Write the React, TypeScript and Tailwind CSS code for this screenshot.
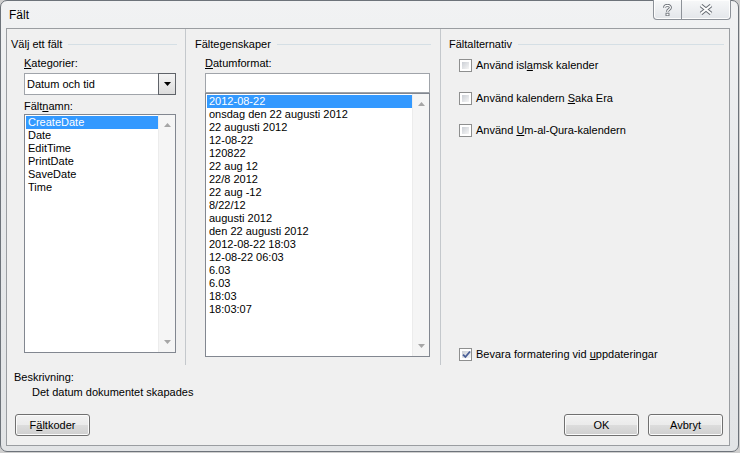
import React from 'react';

const fieldNames = ['CreateDate', 'Date', 'EditTime', 'PrintDate', 'SaveDate', 'Time'];

const dateFormats = [
  '2012-08-22',
  'onsdag den 22 augusti 2012',
  '22 augusti 2012',
  '12-08-22',
  '120822',
  '22 aug 12',
  '22/8 2012',
  '22 aug -12',
  '8/22/12',
  'augusti 2012',
  'den 22 augusti 2012',
  '2012-08-22 18:03',
  '12-08-22 06:03',
  '6.03',
  '6.03',
  '18:03',
  '18:03:07'
];

const btn =
  'h-[22px] w-[75px] rounded-[3px] border border-[#707070] bg-[linear-gradient(to_bottom,#f2f2f2_0%,#ebebeb_50%,#dddddd_50%,#cfcfcf_100%)] shadow-[inset_0_0_0_1px_#fbfbfb] flex items-center justify-center leading-[13px]';

const GroupHeader = ({ title, className }: { title: string; className: string }) => (
  <div className={`flex items-center mt-[9px] h-[13px] ${className}`}>
    <span className="leading-[13px] whitespace-nowrap">{title}</span>
    <div className="flex-1 h-px bg-[#d5dfe5] ml-[6px]" />
  </div>
);

const ScrollArrow = ({ up }: { up?: boolean }) => (
  <svg width="7" height="4" viewBox="0 0 7 4">
    <path d={up ? 'M0 4 L3.5 0 L7 4 Z' : 'M0 0 L7 0 L3.5 4 Z'} fill="#a6a6a6" />
  </svg>
);

const ListBox = ({ items, className }: { items: string[]; className: string }) => (
  <div className={`flex border border-[#828790] bg-white ${className}`}>
    <div className="flex-1 pl-px pt-px">
      {items.map((item, i) => (
        <div
          key={i}
          className={`h-[13px] leading-[13px] pl-[2px] whitespace-nowrap ${
            i === 0 ? 'bg-[#3399ff] text-white' : ''
          }`}
        >
          {item}
        </div>
      ))}
    </div>
    <div className="w-[17px] bg-[#f5f5f5] border-l border-[#ececec] flex flex-col items-center justify-between py-[8px]">
      <ScrollArrow up />
      <ScrollArrow />
    </div>
  </div>
);

const CheckBox = ({ checked }: { checked?: boolean }) => (
  <span className="w-[13px] h-[13px] border border-[#8e8f8f] bg-white p-[2px] flex shrink-0">
    <span className="flex-1 bg-[linear-gradient(135deg,#cbcfd5,#f6f6f6)] flex items-center justify-center">
      {checked && (
        <svg width="9" height="9" viewBox="0 0 9 9">
          <path d="M1 4.6 L3.4 7 L8 1.5" fill="none" stroke="#4a5f97" strokeWidth="1.8" />
        </svg>
      )}
    </span>
  </span>
);

const Option = ({ children, checked, className = '' }: { children: React.ReactNode; checked?: boolean; className?: string }) => (
  <div className={`flex items-center gap-[4px] h-[13px] ${className}`}>
    <CheckBox checked={checked} />
    <span className="leading-[13px] whitespace-nowrap">{children}</span>
  </div>
);

export default function App() {
  return (
    <div className="w-[740px] h-[453px] bg-[#cfcfcf] font-['Liberation_Sans',Arial,sans-serif] text-[11px] text-black">
      <div className="w-[739px] h-[452px] flex flex-col rounded-[7px] border border-[#6d737a] bg-[linear-gradient(180deg,#f1f2f3_0%,#e8eaec_40%,#e2e4e6_100%)]">
        {/* Title bar */}
        <div className="h-[27px] flex justify-between items-start">
          <span className="ml-[8px] mt-[7px] text-[12px] leading-[15px]">Fält</span>
          <div className="-mt-px mr-[7px] flex h-[20px] rounded-b-[4px] border border-[#8d9299] border-t-0 bg-[linear-gradient(to_bottom,#f7f8f9,#e3e6ea)] shadow-[inset_0_0_0_1px_#fdfdfd] overflow-hidden">
            <div className="w-[28px] flex items-center justify-center border-r border-[#8d9299]">
              <svg width="9" height="12" viewBox="0 0 9 12">
                <path d="M1.6 3.8 C1.6 0.6 7.4 0.6 7.4 3.6 C7.4 5.6 4.5 5.6 4.5 7.8" fill="none" stroke="#6b7077" strokeWidth="3" />
                <path d="M1.6 3.8 C1.6 0.6 7.4 0.6 7.4 3.6 C7.4 5.6 4.5 5.6 4.5 7.8" fill="none" stroke="#ffffff" strokeWidth="1.2" />
                <rect x="3" y="9.2" width="3" height="2.6" fill="#ffffff" stroke="#6b7077" strokeWidth="0.9" />
              </svg>
            </div>
            <div className="w-[48px] flex items-center justify-center">
              <svg width="14" height="11" viewBox="0 0 14 11">
                <path d="M2 1.5 L12 9.5 M12 1.5 L2 9.5" stroke="#6b7077" strokeWidth="4" />
                <path d="M2 1.5 L12 9.5 M12 1.5 L2 9.5" stroke="#ffffff" strokeWidth="2" />
              </svg>
            </div>
          </div>
        </div>

        {/* Client area */}
        <div className="ml-[5px] w-[724px] h-[418px] border border-[#9a9da1] bg-[#f0f0f0] flex flex-col">
          <div className="h-[336px] flex">
            {/* Välj ett fält */}
            <div className="w-[179px] border-r border-[#c4c8cc] flex flex-col">
              <GroupHeader title="Välj ett fält" className="pl-[4px] pr-[8px]" />
              <div className="pl-[17px] flex flex-col">
                <div className="mt-[6px] leading-[13px]">
                  <span className="underline">K</span>ategorier:
                </div>
                <div className="mt-[3px] w-[152px] h-[22px] border border-[#a0a4aa] bg-white flex">
                  <span className="flex-1 pl-[2px] leading-[20px]">Datum och tid</span>
                  <div className="-my-px -mr-px w-[18px] border border-[#5f6369] bg-[linear-gradient(to_bottom,#f4f4f4,#dcdcdc)] flex items-center justify-center">
                    <svg width="7" height="4" viewBox="0 0 7 4">
                      <path d="M0 0 L7 0 L3.5 4 Z" fill="#000" />
                    </svg>
                  </div>
                </div>
                <div className="mt-[5px] leading-[13px]">
                  Fält<span className="underline">n</span>amn:
                </div>
                <ListBox items={fieldNames} className="mt-px w-[152px] h-[239px]" />
              </div>
            </div>

            {/* Fältegenskaper */}
            <div className="w-[255px] border-r border-[#c4c8cc] flex flex-col">
              <GroupHeader title="Fältegenskaper" className="pl-[9px] pr-[9px]" />
              <div className="pl-[19px] flex flex-col">
                <div className="mt-[6px] leading-[13px]">
                  <span className="underline">D</span>atumformat:
                </div>
                <div className="mt-[3px] w-[225px] h-[20px] border border-[#a0a4aa] bg-white" />
                <ListBox items={dateFormats} className="w-[225px] h-[264px]" />
              </div>
            </div>

            {/* Fältalternativ */}
            <div className="flex-1 flex flex-col">
              <GroupHeader title="Fältalternativ" className="pl-[8px] pr-[5px]" />
              <div className="pl-[18px] flex flex-col flex-1">
                <Option className="mt-[8px]">
                  Använd isl<span className="underline">a</span>msk kalender
                </Option>
                <Option className="mt-[20px]">
                  Använd kalendern <span className="underline">S</span>aka Era
                </Option>
                <Option className="mt-[19px]">
                  Använd <span className="underline">U</span>m-al-Qura-kalendern
                </Option>
                <Option checked className="mt-auto mb-[4px]">
                  Bevara formatering vid <span className="underline">u</span>ppdateringar
                </Option>
              </div>
            </div>
          </div>

          {/* Beskrivning */}
          <div className="pl-[7px] mt-[6px] leading-[13px]">Beskrivning:</div>
          <div className="pl-[25px] mt-[2px] leading-[13px]">Det datum dokumentet skapades</div>

          {/* Buttons */}
          <div className="mt-[15px] flex items-center pl-[8px] pr-[6px]">
            <button className={btn}>
              F<span className="underline">ä</span>ltkoder
            </button>
            <div className="flex-1" />
            <button className={`${btn} border-[#3c7fb1] shadow-[inset_0_0_0_1px_#a6dbf6]`}>OK</button>
            <button className={`${btn} ml-[9px]`}>Avbryt</button>
          </div>
        </div>
      </div>
    </div>
  );
}
